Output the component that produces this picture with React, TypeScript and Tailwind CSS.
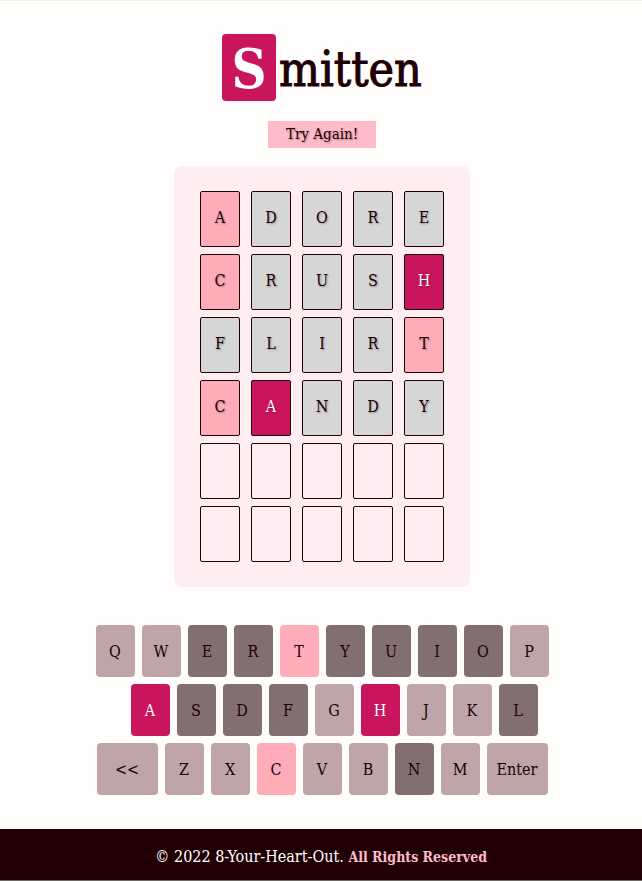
type State = "exact" | "near" | "miss" | "none";

const guesses: { word: string; states: State[] }[] = [
  { word: "ADORE", states: ["near", "miss", "miss", "miss", "miss"] },
  { word: "CRUSH", states: ["near", "miss", "miss", "miss", "exact"] },
  { word: "FLIRT", states: ["miss", "miss", "miss", "miss", "near"] },
  { word: "CANDY", states: ["near", "exact", "miss", "miss", "miss"] },
  { word: "     ", states: ["none", "none", "none", "none", "none"] },
  { word: "     ", states: ["none", "none", "none", "none", "none"] },
];

const tileStyles: Record<State, string> = {
  exact: "bg-[#c9155d] text-white",
  near: "bg-[#ffacb9]",
  miss: "bg-[#d6d6d6]",
  none: "bg-transparent",
};

const keyStyles: Record<State, string> = {
  exact: "bg-[#c9155d] text-white",
  near: "bg-[#ffacb9]",
  miss: "bg-[#826f72]",
  none: "bg-[#bfa5a8]",
};

const keyRows = [
  { keys: ["Q", "W", "E", "R", "T", "Y", "U", "I", "O", "P"], indent: "" },
  { keys: ["A", "S", "D", "F", "G", "H", "J", "K", "L"], indent: "pl-6" },
  { keys: ["<<", "Z", "X", "C", "V", "B", "N", "M", "Enter"], indent: "" },
];

const rank: Record<State, number> = { none: 0, miss: 1, near: 2, exact: 3 };

function keyState(key: string): State {
  let best: State = "none";
  for (const { word, states } of guesses) {
    states.forEach((state, i) => {
      if (word[i] === key && rank[state] > rank[best]) best = state;
    });
  }
  return best;
}

function Tile({ letter, state }: { letter: string; state: State }) {
  return (
    <div
      className={`flex h-14 w-10 items-center justify-center rounded-xs border border-[#200004] pb-0.5 text-base text-shadow-[1px_1px_2px_#00000059] ${tileStyles[state]}`}
    >
      {letter}
    </div>
  );
}

function Key({ label }: { label: string }) {
  const wide = label.length > 1;
  return (
    <button
      type="button"
      aria-label={label === "<<" ? "Delete" : undefined}
      className={`h-[52px] cursor-pointer rounded pt-0.5 text-base ${wide ? "w-[61px]" : "w-[39px]"} ${keyStyles[keyState(label)]}`}
    >
      {label}
    </button>
  );
}

export default function App() {
  return (
    <div className="border-t border-b border-t-[#e3f5e6] border-b-[#6c6b62] bg-[#fffefd] font-['DejaVu_Serif_Condensed','DejaVu_Serif',serif] text-[#200004]">
      <main className="flex flex-col items-center pt-[33px] pb-[34px] pl-0.5">
        <h1 className="flex items-center gap-[3px] text-5xl leading-16">
          <span className="w-[54px] rounded bg-[#c9155d] pt-[3px] text-center text-[54px] font-bold text-white">
            S
          </span>
          <span className="pt-[3px] [-webkit-text-stroke:1px_#200004]">mitten</span>
        </h1>
        <p
          role="status"
          className="mt-5 w-[108px] bg-[#ffbcc8] text-center text-[15px] leading-[27px] text-shadow-[1px_1px_2px_#00000059]"
        >
          Try Again!
        </p>
        <section
          aria-label="Guesses"
          className="mt-[18px] grid grid-cols-5 gap-x-[11px] gap-y-[7px] rounded-lg bg-[#ffeef1] px-[26px] py-[25px]"
        >
          {guesses.map(({ word, states }, row) =>
            states.map((state, i) => (
              <Tile key={`${row}-${i}`} letter={word[i]} state={state} />
            )),
          )}
        </section>
        <section
          aria-label="Keyboard"
          className="mt-[38px] flex flex-col items-center gap-[7px]"
        >
          {keyRows.map(({ keys, indent }) => (
            <div key={keys[0]} className={`flex gap-[7px] ${indent}`}>
              {keys.map((label) => (
                <Key key={label} label={label} />
              ))}
            </div>
          ))}
        </section>
      </main>
      <footer className="bg-[#200004] pt-4 pb-[11px] text-center text-base leading-6 text-white">
        © 2022 8-Your-Heart-Out.{" "}
        <strong className="text-sm leading-6 font-bold text-[#ffbcc8]">
          All Rights Reserved
        </strong>
      </footer>
    </div>
  );
}
